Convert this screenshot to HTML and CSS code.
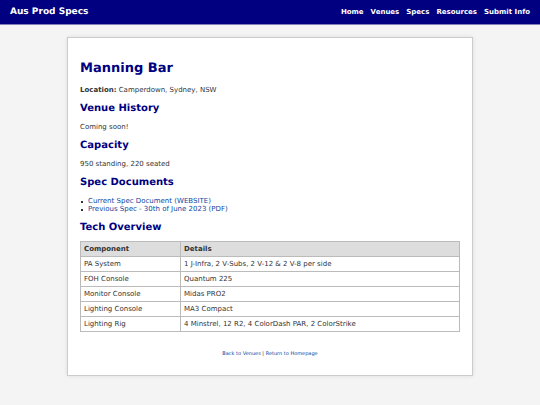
FILE: index.html
```html
<!DOCTYPE html>
<html lang="en">
<head>
    <meta charset="UTF-8">
    <meta name="viewport" content="width=device-width, initial-scale=1.0">
    <title>Manning Bar - Aus Prod Specs</title>
    <link rel="stylesheet" href="styles.css">
</head>
<body>
    <header class="navbar">
        <div class="logo">Aus Prod Specs</div>
        <nav>
            <ul class="nav-links">
                <li><a href="#">Home</a></li>
                <li><a href="#">Venues</a></li>
                <li><a href="#">Specs</a></li>
                <li><a href="#">Resources</a></li>
                <li><a href="#">Submit Info</a></li>
            </ul>
        </nav>
    </header>

    <main class="container">
        <h1>Manning Bar</h1>
        <p><strong>Location:</strong> Camperdown, Sydney, NSW</p>

        <h2>Venue History</h2>
        <p>Coming soon!</p>

        <h2>Capacity</h2>
        <p>950 standing, 220 seated</p>

        <h2>Spec Documents</h2>
        <ul class="doc-list">
            <li><a href="#">Current Spec Document (WEBSITE)</a></li>
            <li><a href="#">Previous Spec - 30th of June 2023 (PDF)</a></li>
        </ul>

        <h2>Tech Overview</h2>
        <table class="tech-table">
            <thead>
                <tr><th class="component">Component</th><th>Details</th></tr>
            </thead>
            <tbody>
                <tr><td>PA System</td><td>1 J-Infra, 2 V-Subs, 2 V-12 &amp; 2 V-8 per side</td></tr>
                <tr><td>FOH Console</td><td>Quantum 225</td></tr>
                <tr><td>Monitor Console</td><td>Midas PRO2</td></tr>
                <tr><td>Lighting Console</td><td>MA3 Compact</td></tr>
                <tr><td>Lighting Rig</td><td>4 Minstrel, 12 R2, 4 ColorDash PAR, 2 ColorStrike</td></tr>
            </tbody>
        </table>

        <div class="footer-links">
            <a href="#">Back to Venues</a> | <a href="#">Return to Homepage</a>
        </div>
    </main>
</body>
</html>
```

FILE: styles.css
```css
* {
    box-sizing: border-box;
}

body {
    margin: 0;
    background-color: #f4f4f4;
    color: #333;
    font-family: Verdana, "DejaVu Sans", sans-serif;
    font-size: 7px;
    line-height: 8px;
    text-rendering: geometricPrecision;
}

a {
    color: #0d47a1;
    text-decoration: none;
}

.navbar {
    display: flex;
    justify-content: space-between;
    align-items: center;
    padding: 8px 10px;
    border-bottom: 1px solid #8080b8;
    background-color: #000080;
    color: white;
}

.logo {
    font-size: 9px;
    font-weight: bold;
}

.nav-links {
    display: flex;
    gap: 7px;
    margin: 0;
    padding: 0;
    list-style: none;
}

.nav-links a {
    color: white;
    font-weight: bold;
}

.container {
    width: 90%;
    max-width: 406px;
    margin: 12px auto;
    padding: 13px 12px 17px;
    background-color: white;
    border: 1px solid #ccc;
    box-shadow: 0 0 4px rgba(0, 0, 0, 0.1);
}

h1,
h2 {
    color: #000080;
}

h1 {
    margin: 9px 0;
    font-size: 13px;
    line-height: 17px;
}

h2 {
    margin: 8px 0 7px;
    font-size: 10px;
    line-height: 13px;
}

p {
    margin: 8px 0;
}

.doc-list {
    margin: 8px 0;
    padding-left: 8px;
    list-style: none;
}

.doc-list li::before {
    content: "";
    float: left;
    width: 2px;
    height: 2px;
    margin: 4px 0 0 -7px;
    background-color: #333;
}

.tech-table {
    width: 100%;
    border-collapse: collapse;
}

.tech-table th,
.tech-table td {
    padding: 3px;
    border: 1px solid #bbb;
    text-align: left;
}

.tech-table th {
    background-color: #ddd;
}

.tech-table .component {
    width: 100px;
}

.footer-links {
    margin-top: 18px;
    font-size: 5px;
    text-align: center;
}
```
